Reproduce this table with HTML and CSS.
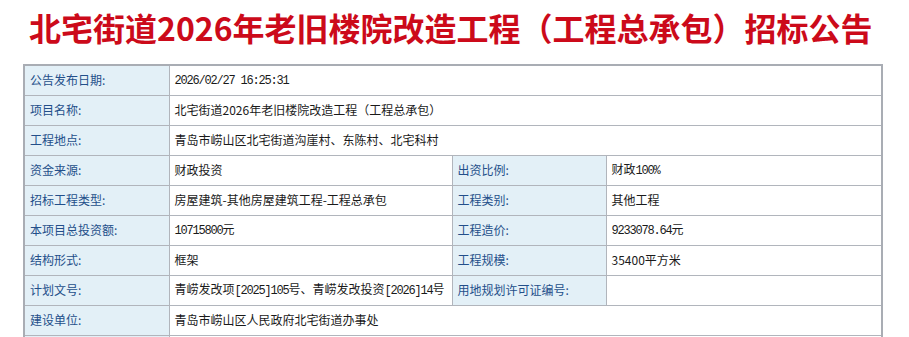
FILE: index.html
```html
<!DOCTYPE html>
<html lang="zh-CN">
<head>
<meta charset="utf-8">
<title>北宅街道2026年老旧楼院改造工程（工程总承包）招标公告</title>
<link rel="stylesheet" href="styles.css">
</head>
<body>
<div class="page">
  <h1 class="title">北宅街道2026年老旧楼院改造工程（工程总承包）招标公告</h1>
  <table class="info">
    <colgroup>
      <col class="c-label">
      <col class="c-value">
      <col class="c-label2">
      <col class="c-value2">
    </colgroup>
    <tr>
      <td class="label">公告发布日期:</td>
      <td class="value" colspan="3"><span class="num">2026/02/27 16:25:31</span></td>
    </tr>
    <tr>
      <td class="label">项目名称:</td>
      <td class="value" colspan="3">北宅街道2026年老旧楼院改造工程（工程总承包）</td>
    </tr>
    <tr>
      <td class="label">工程地点:</td>
      <td class="value" colspan="3">青岛市崂山区北宅街道沟崖村、东陈村、北宅科村</td>
    </tr>
    <tr>
      <td class="label">资金来源:</td>
      <td class="value">财政投资</td>
      <td class="label">出资比例:</td>
      <td class="value">财政<span class="num">100%</span></td>
    </tr>
    <tr>
      <td class="label">招标工程类型:</td>
      <td class="value">房屋建筑-其他房屋建筑工程-工程总承包</td>
      <td class="label">工程类别:</td>
      <td class="value">其他工程</td>
    </tr>
    <tr>
      <td class="label">本项目总投资额:</td>
      <td class="value"><span class="num">10715800</span>元</td>
      <td class="label">工程造价:</td>
      <td class="value"><span class="num">9233078.64</span>元</td>
    </tr>
    <tr>
      <td class="label">结构形式:</td>
      <td class="value">框架</td>
      <td class="label">工程规模:</td>
      <td class="value">35400平方米</td>
    </tr>
    <tr>
      <td class="label">计划文号:</td>
      <td class="value">青崂发改项<span class="num">[2025]105</span>号、青崂发改投资<span class="num">[2026]14</span>号</td>
      <td class="label">用地规划许可证编号:</td>
      <td class="value"></td>
    </tr>
    <tr>
      <td class="label">建设单位:</td>
      <td class="value" colspan="3">青岛市崂山区人民政府北宅街道办事处</td>
    </tr>
    <tr>
      <td class="label">&nbsp;</td>
      <td class="value" colspan="3"></td>
    </tr>
  </table>
</div>
</body>
</html>
```

FILE: styles.css
```css
html, body {
  margin: 0;
  padding: 0;
  background: #ffffff;
}

.page {
  padding: 0 0 0 23px;
  font-family: "Noto Sans CJK SC", "Noto Sans", sans-serif;
}

.title {
  margin: 0;
  padding: 7px 0 0 6px;
  height: 64px;
  box-sizing: border-box;
  font-size: 32px;
  line-height: 40px;
  font-weight: bold;
  color: #cc0a1a;
  letter-spacing: 0;
  white-space: nowrap;
}

.info {
  border-collapse: collapse;
  border: 2px solid #a9adb4;
  width: 860px;
  table-layout: fixed;
  font-size: 12px;
}

.c-label { width: 145px; }
.c-value { width: 283px; }
.c-label2 { width: 154px; }
.c-value2 { width: auto; }

.info td {
  border: 1px solid #b1b5bc;
  height: 30px;
  padding: 0 5px;
  box-sizing: border-box;
  line-height: 16px;
  white-space: nowrap;
  overflow: hidden;
}

.info .label {
  background: #e3f0f7;
  color: #234f8a;
}

.info .value {
  background: #ffffff;
  color: #1a1a1a;
}

.num {
  font-family: "Liberation Mono", "DejaVu Sans Mono", monospace;
  letter-spacing: -1.2px;
}
```
